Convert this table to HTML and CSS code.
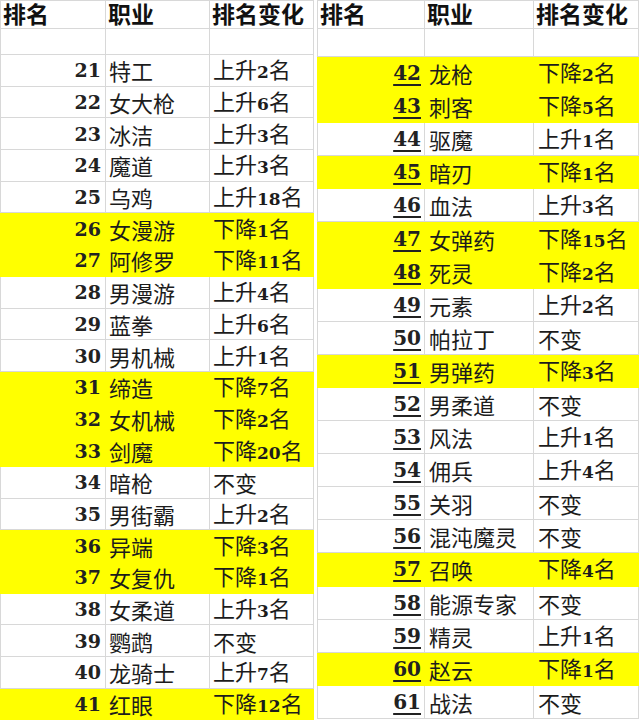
FILE: index.html
```html
<!DOCTYPE html>
<html lang="zh">
<head>
<meta charset="utf-8">
<title>排名变化</title>
<link rel="stylesheet" href="styles.css">
</head>
<body>
<div class="sheet">
  <table class="rank left">
    <colgroup><col class="c1"><col class="c2"><col class="c3"></colgroup>
    <tr class="head"><th>排名</th><th>职业</th><th>排名变化</th></tr>
    <tr class="blank"><td></td><td></td><td></td></tr>
    <tr><td class="num">21</td><td>特工</td><td>上升<span class="d">2</span>名</td></tr>
    <tr><td class="num">22</td><td>女大枪</td><td>上升<span class="d">6</span>名</td></tr>
    <tr><td class="num">23</td><td>冰洁</td><td>上升<span class="d">3</span>名</td></tr>
    <tr><td class="num">24</td><td>魔道</td><td>上升<span class="d">3</span>名</td></tr>
    <tr><td class="num">25</td><td>乌鸡</td><td>上升<span class="d">18</span>名</td></tr>
    <tr class="hl"><td class="num">26</td><td>女漫游</td><td>下降<span class="d">1</span>名</td></tr>
    <tr class="hl"><td class="num">27</td><td>阿修罗</td><td>下降<span class="d">11</span>名</td></tr>
    <tr><td class="num">28</td><td>男漫游</td><td>上升<span class="d">4</span>名</td></tr>
    <tr><td class="num">29</td><td>蓝拳</td><td>上升<span class="d">6</span>名</td></tr>
    <tr><td class="num">30</td><td>男机械</td><td>上升<span class="d">1</span>名</td></tr>
    <tr class="hl"><td class="num">31</td><td>缔造</td><td>下降<span class="d">7</span>名</td></tr>
    <tr class="hl"><td class="num">32</td><td>女机械</td><td>下降<span class="d">2</span>名</td></tr>
    <tr class="hl"><td class="num">33</td><td>剑魔</td><td>下降<span class="d">20</span>名</td></tr>
    <tr><td class="num">34</td><td>暗枪</td><td>不变</td></tr>
    <tr><td class="num">35</td><td>男街霸</td><td>上升<span class="d">2</span>名</td></tr>
    <tr class="hl"><td class="num">36</td><td>异端</td><td>下降<span class="d">3</span>名</td></tr>
    <tr class="hl"><td class="num">37</td><td>女复仇</td><td>下降<span class="d">1</span>名</td></tr>
    <tr><td class="num">38</td><td>女柔道</td><td>上升<span class="d">3</span>名</td></tr>
    <tr><td class="num">39</td><td>鹦鹉</td><td>不变</td></tr>
    <tr><td class="num">40</td><td>龙骑士</td><td>上升<span class="d">7</span>名</td></tr>
    <tr class="hl"><td class="num">41</td><td>红眼</td><td>下降<span class="d">12</span>名</td></tr>
  </table>
  <table class="rank right">
    <colgroup><col class="c1"><col class="c2"><col class="c3"></colgroup>
    <tr class="head"><th>排名</th><th>职业</th><th>排名变化</th></tr>
    <tr class="blank"><td></td><td></td><td></td></tr>
    <tr class="hl"><td class="num">42</td><td>龙枪</td><td>下降<span class="d">2</span>名</td></tr>
    <tr class="hl"><td class="num">43</td><td>刺客</td><td>下降<span class="d">5</span>名</td></tr>
    <tr><td class="num">44</td><td>驱魔</td><td>上升<span class="d">1</span>名</td></tr>
    <tr class="hl"><td class="num">45</td><td>暗刃</td><td>下降<span class="d">1</span>名</td></tr>
    <tr><td class="num">46</td><td>血法</td><td>上升<span class="d">3</span>名</td></tr>
    <tr class="hl"><td class="num">47</td><td>女弹药</td><td>下降<span class="d">15</span>名</td></tr>
    <tr class="hl"><td class="num">48</td><td>死灵</td><td>下降<span class="d">2</span>名</td></tr>
    <tr><td class="num">49</td><td>元素</td><td>上升<span class="d">2</span>名</td></tr>
    <tr><td class="num">50</td><td>帕拉丁</td><td>不变</td></tr>
    <tr class="hl"><td class="num">51</td><td>男弹药</td><td>下降<span class="d">3</span>名</td></tr>
    <tr><td class="num">52</td><td>男柔道</td><td>不变</td></tr>
    <tr><td class="num">53</td><td>风法</td><td>上升<span class="d">1</span>名</td></tr>
    <tr><td class="num">54</td><td>佣兵</td><td>上升<span class="d">4</span>名</td></tr>
    <tr><td class="num">55</td><td>关羽</td><td>不变</td></tr>
    <tr><td class="num">56</td><td>混沌魔灵</td><td>不变</td></tr>
    <tr class="hl"><td class="num">57</td><td>召唤</td><td>下降<span class="d">4</span>名</td></tr>
    <tr><td class="num">58</td><td>能源专家</td><td>不变</td></tr>
    <tr><td class="num">59</td><td>精灵</td><td>上升<span class="d">1</span>名</td></tr>
    <tr class="hl"><td class="num">60</td><td>赵云</td><td>下降<span class="d">1</span>名</td></tr>
    <tr><td class="num">61</td><td>战法</td><td>不变</td></tr>
  </table>
</div>
</body>
</html>
```
FILE: styles.css
```css
html, body {
  margin: 0;
  padding: 0;
  background: #ffffff;
}

.sheet {
  display: flex;
  align-items: flex-start;
  gap: 3px;
  width: 641px;
  height: 722px;
  overflow: hidden;
  font-family: "Noto Sans CJK SC", "DejaVu Sans", sans-serif;
  color: #1c1c1c;
}

.rank {
  border-collapse: collapse;
  table-layout: fixed;
}

.rank.left { width: 313px; }
.rank.right { width: 321px; }

.left .c1 { width: 105px; }
.left .c2 { width: 104px; }
.left .c3 { width: 104px; }

.right .c1 { width: 107px; }
.right .c2 { width: 109px; }
.right .c3 { width: 105px; }

.rank th,
.rank td {
  border: 1px solid #d8d8d8;
  padding: 0 0 0 3px;
  white-space: nowrap;
  text-align: left;
  vertical-align: middle;
}

.rank th {
  font-family: "Liberation Sans", "Noto Sans CJK SC", sans-serif;
  font-weight: 700;
  font-size: 23px;
  line-height: 26px;
  color: #111;
  padding: 1px 0 0 2px;
}

.left .head { height: 27px; }
.left .blank { height: 26px; }
.left tr { height: 31.7px; }

.right .head { height: 28px; }
.right .blank { height: 28px; }
.right tr { height: 33.1px; }

.rank td {
  font-size: 22px;
  line-height: 26px;
}

.right td { padding-left: 4px; }

.rank td.num {
  text-align: right;
  padding: 0 4px 0 0;
  font-family: "DejaVu Serif", "Liberation Serif", serif;
  font-weight: 700;
  font-size: 19px;
  color: #222;
}

.right td.num {
  font-size: 20px;
  padding-right: 3px;
  text-decoration: underline;
  text-decoration-thickness: 2px;
  text-underline-offset: 4px;
}

.d {
  font-family: "DejaVu Serif", "Liberation Serif", serif;
  font-weight: 700;
  font-size: 17px;
}

.rank tr.hl td {
  background: #ffff00;
  border-color: #ffff00;
}
```
